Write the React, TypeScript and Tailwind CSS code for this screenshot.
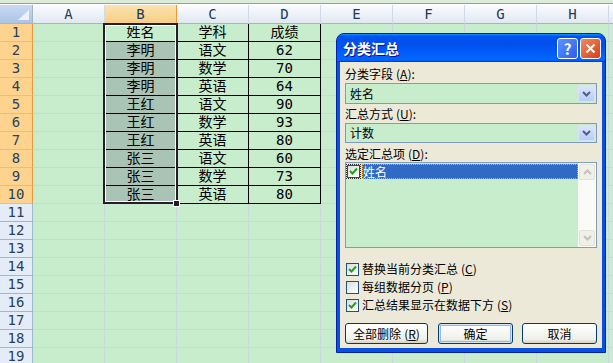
import React from "react";

const data: string[][] = [
  ["姓名", "学科", "成绩"],
  ["李明", "语文", "62"],
  ["李明", "数学", "70"],
  ["李明", "英语", "64"],
  ["王红", "语文", "90"],
  ["王红", "数学", "93"],
  ["王红", "英语", "80"],
  ["张三", "语文", "60"],
  ["张三", "数学", "73"],
  ["张三", "英语", "80"],
];

const colLetters = ["A", "B", "C", "D", "E", "F", "G", "H", ""];
const sheetFont = { fontFamily: '"DejaVu Sans Mono", "Noto Sans CJK SC", monospace' };
const uiFont = { fontFamily: '"Noto Sans CJK SC", "Liberation Sans", sans-serif' };

function Chevron({ color, up }: { color: string; up?: boolean }) {
  return (
    <svg width="9" height="6" viewBox="0 0 9 6">
      <polyline
        points={up ? "1,5 4.5,1.5 8,5" : "1,1 4.5,4.5 8,1"}
        fill="none"
        stroke={color}
        strokeWidth="2"
      />
    </svg>
  );
}

function Check() {
  return (
    <svg width="9" height="9" viewBox="0 0 9 9">
      <polyline points="1,4 3.5,6.5 8,1.5" fill="none" stroke="#21a121" strokeWidth="2" />
    </svg>
  );
}

function CheckBox({ checked }: { checked: boolean }) {
  return (
    <div className="w-[13px] h-[13px] border border-[#1c5180] bg-[linear-gradient(135deg,#dcdcd7,#ffffff)] flex items-center justify-center shrink-0">
      {checked && <Check />}
    </div>
  );
}

function Combo({ value, h }: { value: string; h: string }) {
  return (
    <div className={`flex items-center border border-[#7f9db9] bg-[#c7edcc] ${h}`}>
      <div className="flex-1 pl-[4px] text-[12px] leading-[16px] text-black">{value}</div>
      <div className="w-[17px] h-[calc(100%-2px)] mr-[1px] rounded-[2px] border border-[#d8e2fb] bg-[linear-gradient(to_bottom,#dbe5fc,#b9cbf6)] flex items-center justify-center">
        <Chevron color="#4d6185" />
      </div>
    </div>
  );
}

function Mn({ k }: { k: string }) {
  return (
    <span className="ml-[3px]">
      (<span className="underline">{k}</span>)
    </span>
  );
}

function Label({ text, k }: { text: string; k: string }) {
  return (
    <div className="h-[16px] text-[12px] leading-[16px] text-black">
      {text}
      <Mn k={k} />:
    </div>
  );
}

function Dialog() {
  return (
    <div
      className="absolute left-[336px] top-[33px] w-[270px] h-[320px] flex flex-col rounded-t-[8px] bg-[#0a4fe0] border border-[#0022a8]"
      style={uiFont}
    >
      <div className="h-[28px] shrink-0 rounded-t-[7px] bg-[linear-gradient(to_bottom,#0997ff_0%,#0053ee_8%,#0050ee_40%,#0066ff_88%,#0066ff_93%,#005bff_95%,#003dd7_96%,#003dd7_100%)] flex items-center pl-[6px] pr-[4px]">
        <div className="flex-1 text-white font-bold text-[14px] leading-[16px] [text-shadow:1px_1px_#0f1089]">
          分类汇总
        </div>
        <div className="w-[21px] h-[21px] rounded-[3px] border border-white bg-[linear-gradient(135deg,#5f93ff,#2a5fe8)] flex items-center justify-center text-white font-bold text-[15px] leading-none">
          ?
        </div>
        <div className="ml-[2px] w-[21px] h-[21px] rounded-[3px] border border-white bg-[linear-gradient(135deg,#f08a60,#d3401c)] flex items-center justify-center">
          <svg width="11" height="11" viewBox="0 0 11 11">
            <path d="M1.5 1.5 L9.5 9.5 M9.5 1.5 L1.5 9.5" stroke="white" strokeWidth="2" />
          </svg>
        </div>
      </div>
      <div className="flex-1 mx-[3px] mb-[4px] bg-[#ece9d8] flex flex-col px-[5px] pt-[4px]">
        <Label text="分类字段" k="A" />
        <div className="mt-[1px]">
          <Combo value="姓名" h="h-[21px]" />
        </div>
        <div className="mt-[2px]">
          <Label text="汇总方式" k="U" />
        </div>
        <div className="mt-[1px]">
          <Combo value="计数" h="h-[20px]" />
        </div>
        <div className="mt-[3px]">
          <Label text="选定汇总项" k="D" />
        </div>
        <div className="h-[86px] border border-[#7f9db9] bg-[#c7edcc] flex">
          <div className="flex-1 pt-[1px] pl-[1px]">
            <div className="flex items-center h-[15px]">
              <div className="outline-1 outline-dotted outline-[#333]">
                <CheckBox checked />
              </div>
              <div className="ml-[2px] flex-1 h-[15px] bg-[#316ac5] outline-1 outline-dotted outline-[#f2a93b] -outline-offset-1 text-white text-[12px] leading-[15px] pl-[1px]">
                姓名
              </div>
            </div>
          </div>
          <div className="w-[18px] pl-[1px] pr-[1px] bg-[#fafaf6] flex flex-col justify-between py-[1px]">
            <div className="w-[16px] h-[16px] rounded-[2px] border border-[#e3e2da] bg-[#f0efe8] flex items-center justify-center">
              <Chevron color="#c4c3b8" up />
            </div>
            <div className="w-[16px] h-[16px] rounded-[2px] border border-[#e3e2da] bg-[#f0efe8] flex items-center justify-center">
              <Chevron color="#c4c3b8" />
            </div>
          </div>
        </div>
        <div className="mt-[12px] flex flex-col pl-[1px]">
          {[
            ["替换当前分类汇总", "C", true],
            ["每组数据分页", "P", false],
            ["汇总结果显示在数据下方", "S", true],
          ].map(([t, k, c]) => (
            <div key={t as string} className="h-[18px] flex items-center gap-[3px]">
              <CheckBox checked={c as boolean} />
              <span className="text-[12px] leading-[16px] text-black">
                {t as string}
                <Mn k={k as string} />
              </span>
            </div>
          ))}
        </div>
        <div className="mt-[9px] flex">
          <div className="w-[83px] h-[21px] rounded-[3px] border border-[#003c74] bg-[linear-gradient(to_bottom,#ffffff,#f0f0ea_80%,#d6d0c5)] flex items-center justify-center text-[12px] text-black">
            全部删除
            <Mn k="R" />
          </div>
          <div className="ml-[10px] w-[75px] h-[21px] rounded-[3px] border border-[#003c74] bg-[linear-gradient(to_bottom,#ffffff,#f0f0ea_80%,#d6d0c5)] shadow-[inset_0_0_0_1px_#cee7ff,inset_0_0_0_2px_#98b8ea] flex items-center justify-center text-[12px] text-black">
            确定
          </div>
          <div className="ml-[9px] w-[75px] h-[21px] rounded-[3px] border border-[#003c74] bg-[linear-gradient(to_bottom,#ffffff,#f0f0ea_80%,#d6d0c5)] flex items-center justify-center text-[12px] text-black">
            取消
          </div>
        </div>
      </div>
    </div>
  );
}

export default function App() {
  const rows = Array.from({ length: 19 }, (_, i) => i + 1);
  return (
    <div className="relative w-[613px] h-[363px] overflow-hidden bg-[#c7edcc]" style={sheetFont}>
      <div className="h-[3px] bg-[#dcecd9]" />
      <div className="h-[1px] bg-[#8e9fb4]" />
      <div className="h-[1px] bg-white" />
      {/* column header */}
      <div className="flex h-[19px]">
        <div className="w-[33px] shrink-0 h-full border-r border-b border-[#9eb6ce] bg-[linear-gradient(to_bottom,#c9daf2,#abc4e8)] relative">
          <svg className="absolute right-[2px] bottom-[2px]" width="12" height="11" viewBox="0 0 12 11">
            <polygon points="11,0 11,10 0,10" fill="#eef2f8" />
          </svg>
        </div>
        {colLetters.map((c, i) =>
          c === "B" ? (
            <div
              key={i}
              className="w-[72px] shrink-0 h-full border-r border-b border-[#f29536] bg-[linear-gradient(to_bottom,#fbe2b1,#f8cf83)] flex items-center justify-center text-[14px] text-[#1e395b]"
            >
              {c}
            </div>
          ) : (
            <div
              key={i}
              className="w-[72px] shrink-0 h-full border-r border-[#d0d9e6] border-b border-b-[#9eb6ce] bg-[linear-gradient(to_bottom,#fafcfe,#e1e8f2)] flex items-center justify-center text-[14px] text-[#1e395b]"
            >
              {c}
            </div>
          )
        )}
      </div>
      {rows.map((r) => {
        const inData = r <= 10;
        const d = inData ? data[r - 1] : null;
        return (
          <div key={r} className="flex h-[18px]">
            {inData ? (
              <div className="w-[33px] shrink-0 h-full border-r border-r-[#f29536] border-b border-b-[#f3bd6c] bg-[#fed38e] flex items-center justify-center text-[14px] text-[#27415f]">
                {r}
              </div>
            ) : (
              <div className="w-[33px] shrink-0 h-full border-r border-b border-[#9eb6ce] bg-[#e4ecf7] flex items-center justify-center text-[14px] text-[#27415f]">
                {r}
              </div>
            )}
            {colLetters.map((c, ci) => {
              if (inData && ci === 0) {
                return (
                  <div key={ci} className="w-[72px] shrink-0 h-full border-r border-r-black border-b border-b-[#cdd5e0]" />
                );
              }
              if (inData && ci >= 1 && ci <= 3) {
                const shaded = ci === 1 && r > 1;
                return (
                  <div
                    key={ci}
                    className={`w-[72px] shrink-0 h-full border-r border-b border-black flex items-center justify-center text-[14px] leading-[17px] text-black ${
                      shaded ? "bg-[#a9c3b4]" : ""
                    }`}
                  >
                    {d![ci - 1]}
                  </div>
                );
              }
              return <div key={ci} className="w-[72px] shrink-0 h-full border-r border-b border-[#cdd5e0]" />;
            })}
          </div>
        );
      })}
      {/* selection border */}
      <div className="absolute left-[103px] top-[23px] w-[75px] h-[181px] border-2 border-[#2a1a2c] shadow-[inset_0_0_0_1px_#ffffff] pointer-events-none" />
      <div className="absolute left-[173px] top-[200px] w-[7px] h-[7px] bg-[#2a1a2c] border border-white" />
      <Dialog />
    </div>
  );
}
